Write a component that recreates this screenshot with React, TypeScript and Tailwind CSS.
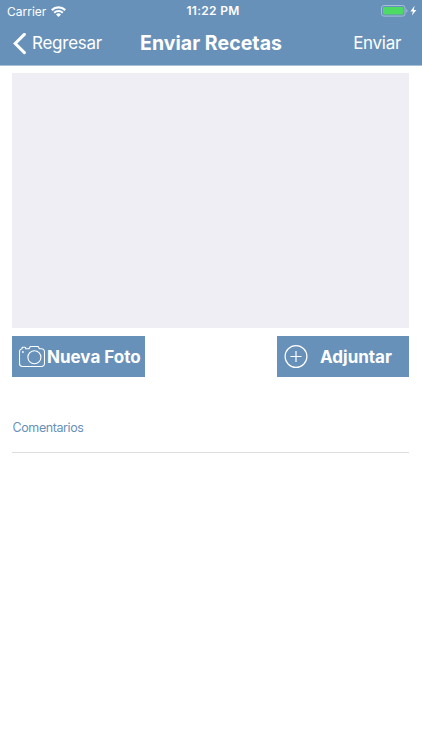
import { useState } from "react";

const WifiIcon = () => (
  <svg width="15" height="11" viewBox="0 0 15 11" fill="none" stroke="white">
    <path d="M.8 4.1a9.7 9.7 0 0 1 13.4 0" strokeWidth="2.2" />
    <path d="M3.2 6.7a6.1 6.1 0 0 1 8.6 0" strokeWidth="2" />
    <path d="M7.5 11 5 8.5a3.5 3.5 0 0 1 5 0z" fill="white" stroke="none" />
  </svg>
);

const BatteryIcon = () => (
  <svg width="36" height="12" viewBox="0 0 36 12" fill="none">
    <rect x="0.5" y="0.5" width="23.5" height="10.6" rx="2.4" stroke="#a5c0d8" />
    <rect x="2" y="2" width="20.5" height="7.6" rx="1" fill="#4cd964" />
    <path d="M25.3 4v3.6c1.6-.5 1.6-3.1 0-3.6z" fill="#a5c0d8" />
    <path d="M33.6.8 29.4 6.4h2.5l-1 4.2 4.5-5.7h-2.6z" fill="white" />
  </svg>
);

const BackIcon = () => (
  <svg width="14" height="22" viewBox="0 0 14 22" fill="none">
    <path d="M11.4 1.4 2.2 10.5l9.2 9.1" stroke="white" strokeWidth="3" strokeLinecap="round" />
  </svg>
);

const CameraIcon = () => (
  <svg width="26" height="22" viewBox="0 0 26 22" fill="none" stroke="white" strokeWidth="1.1">
    <path d="M3 2.8V2c0-.5.3-.8.8-.8h2.1c.5 0 .8.3.8.8v.8h2.6c.5 0 .8-.2 1-.6l.5-1c.2-.4.5-.7 1-.7h6.8c.5 0 .8.3 1 .7l.5 1c.2.4.5.6 1 .6h1.4a3 3 0 0 1 3 3v11.7a3 3 0 0 1-3 3h-19a3 3 0 0 1-3-3V5.8a3 3 0 0 1 2.5-3z" />
    <circle cx="15.4" cy="11.2" r="6.5" />
    <circle cx="3.9" cy="6" r="0.9" fill="white" stroke="none" />
  </svg>
);

const AddIcon = () => (
  <svg width="24" height="24" viewBox="0 0 24 24" fill="none" stroke="white" strokeWidth="1.2">
    <circle cx="12" cy="11.5" r="10.9" />
    <path d="M12 5.9v11.2M6.4 11.5h11.2" />
  </svg>
);

const StatusBar = () => (
  <div className="grid h-[22px] grid-cols-3 items-center pl-[7px] pr-[5px] text-[12px] leading-none">
    <div className="flex items-center gap-[5px]">
      <span className="pt-px">Carrier</span>
      <WifiIcon />
    </div>
    <span className="pl-0.5 text-center font-semibold tracking-[0.3px]">11:22 PM</span>
    <div className="flex justify-end">
      <BatteryIcon />
    </div>
  </div>
);

const NavBar = () => (
  <div className="grid h-[43px] grid-cols-[110px_1fr_102px] items-center pl-[13px] pr-[21px]">
    <button type="button" className="flex items-center gap-[5px] text-[17px] leading-none tracking-[-0.25px]">
      <BackIcon />
      <span>Regresar</span>
    </button>
    <h1 className="text-center text-[19.5px] font-bold leading-none tracking-[0.05px] whitespace-nowrap">
      Enviar Recetas
    </h1>
    <button type="button" className="text-right text-[17px] leading-none tracking-[-0.3px]">
      Enviar
    </button>
  </div>
);

export default function App() {
  const [comments, setComments] = useState("");

  return (
    <div className="min-h-screen bg-white font-['Inter','Liberation_Sans',sans-serif]">
      <header className="h-[66px] border-b border-[#a5c0d8] bg-[#6891b9] text-white">
        <StatusBar />
        <NavBar />
      </header>

      <main className="pl-3 pr-[13px] pt-[7px]">
        <div className="h-[255px] bg-[#efeef5]" />

        <div className="mt-2 flex justify-between text-[17px] font-bold text-white">
          <button type="button" className="flex h-[41px] w-[133px] items-center bg-[#6891b9] pl-[7px]">
            <CameraIcon />
            <span className="ml-0.5 pt-0.5 whitespace-nowrap">Nueva Foto</span>
          </button>
          <button type="button" className="flex h-[41px] w-[132px] items-center bg-[#6891b9] pl-[7px]">
            <AddIcon />
            <span className="ml-3 pt-0.5">Adjuntar</span>
          </button>
        </div>

        <input
          type="text"
          aria-label="Comentarios"
          placeholder="Comentarios"
          value={comments}
          onChange={(event) => setComments(event.currentTarget.value)}
          className="mt-[25px] block h-[51px] w-full border-b border-[#dedede] pl-[0.5px] text-[12.5px] tracking-[-0.4px] text-[#6891b9] outline-none placeholder:text-[#6891b9]"
        />
      </main>
    </div>
  );
}
